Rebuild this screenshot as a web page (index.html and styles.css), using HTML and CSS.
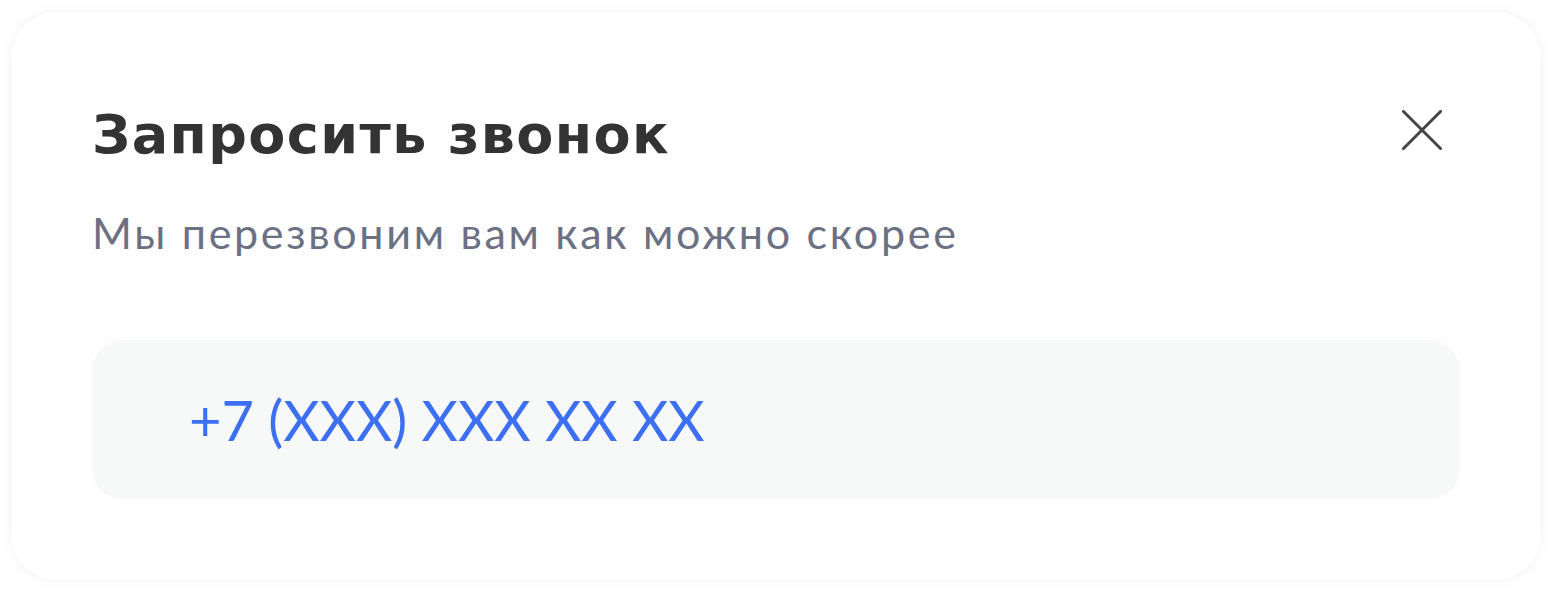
FILE: index.html
```html
<!DOCTYPE html>
<html lang="ru">
<head>
<meta charset="utf-8">
<title>Запросить звонок</title>
<link rel="stylesheet" href="styles.css">
</head>
<body>
<div class="card">
  <div class="header">
    <h1 class="title">Запросить звонок</h1>
    <button class="close" aria-label="Закрыть">
      <svg width="40" height="40" viewBox="0 0 40 40"><path d="M1.5 1.5 L38.5 38.5 M38.5 1.5 L1.5 38.5" stroke="#444448" stroke-width="3" stroke-linecap="round" fill="none"/></svg>
    </button>
  </div>
  <p class="subtitle">Мы перезвоним вам как можно скорее</p>
  <div class="field">
    <span class="phone">+7 (XXX) XXX XX XX</span>
  </div>
</div>
</body>
</html>
```
FILE: styles.css
```css
html, body {
  margin: 0;
  padding: 0;
  background: #ffffff;
}
body {
  padding: 12px 13px 13px 12px;
}
.card {
  box-sizing: border-box;
  width: 1528px;
  height: 568px;
  background: #ffffff;
  border-radius: 44px;
  box-shadow: 0 0 14px rgba(0, 0, 0, 0.06);
  padding: 96px 80px 81px 80px;
}
.header {
  display: flex;
  justify-content: space-between;
  align-items: flex-start;
}
.title {
  margin: 0;
  font-family: "DejaVu Sans", Inter, sans-serif;
  font-weight: 700;
  font-size: 54px;
  line-height: 1;
  color: #333333;
  letter-spacing: 1.4px;
}
.close {
  border: 0;
  background: none;
  padding: 0;
  margin: 2px 18px 0 0;
  width: 40px;
  height: 40px;
  display: block;
}
.close svg { display: block; }
.subtitle {
  margin: 49px 0 0 0;
  font-family: Lato, sans-serif;
  font-size: 43px;
  line-height: 1;
  color: #6b7083;
  letter-spacing: 2.7px;
}
.field {
  margin-top: 86px;
  height: 159px;
  border-radius: 30px;
  background: #f7f9f9;
  display: flex;
  align-items: center;
  padding-left: 97px;
}
.phone {
  font-family: Lato, sans-serif;
  font-size: 56px;
  line-height: 1;
  color: #3c6ff2;
}
```
